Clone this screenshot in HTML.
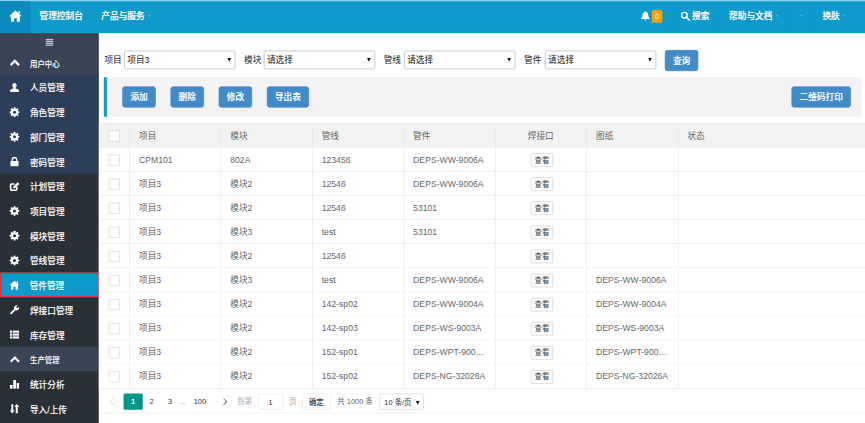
<!DOCTYPE html>
<html lang="zh-CN"><head><meta charset="utf-8"><title>管件管理</title>
<style>
html,body{margin:0;padding:0;width:865px;height:423px;overflow:hidden;background:#fff}
#w{position:absolute;left:0;top:0;width:1400px;height:686px;transform:scale(0.6179);transform-origin:0 0;font-family:"Liberation Sans","Noto Sans CJK SC",sans-serif;font-size:14px;color:#333;background:#fff;overflow:hidden}
#w *{box-sizing:border-box}
#strip{position:absolute;left:0;top:0;width:1400px;height:2px;background:#7fd1f0}
#top{position:absolute;left:0;top:2px;width:1400px;height:52px;background:#0e9acb;color:#fff;font-size:14px}
#homeb{position:absolute;left:0;top:0;width:49px;height:52px;background:#0b8bbd}
#homeb svg{position:absolute;left:14px;top:13px;width:22px;height:22px}
.tn{position:absolute;top:0;height:52px;line-height:47px;white-space:nowrap;font-weight:500;-webkit-text-stroke:.35px #fff}
.car{display:inline-block;width:0;height:0;border-left:3.500px solid transparent;border-right:3.500px solid transparent;border-top:4px solid rgba(255,255,255,.22);margin-left:5px;vertical-align:middle}
.dv{position:absolute;top:0;width:1px;height:52px;background:rgba(0,0,0,.03)}
#side{position:absolute;left:0;top:54px;width:160px;height:640px;background:#293038;color:#fff}
#fold{height:27px;position:relative}.bgl{position:absolute;left:0;width:160px}
#fold i{position:absolute;left:74px;width:11.500px;height:2px;background:#c5cbd2}
.st,.si{height:40px;position:relative;white-space:nowrap}
.st{font-size:12px}

.si.act{background:#0e9acb;border:2.500px solid #e0303c}
.ic{position:absolute;left:15px;top:12px;width:17px;height:17px}
.ic svg{width:100%;height:100%;display:block}
.st .ic{left:14.500px;top:12px;width:18px;height:18px}
.tx{position:absolute;left:48.500px;top:0;line-height:45px;font-weight:500;-webkit-text-stroke:.12px #fff}
.st .tx{left:48.500px;line-height:46px}
.si.act .ic{left:12.500px;top:9.500px;width:17px;height:17px}
.si.act .tx{left:46px;top:-2.500px}
#main{position:absolute;left:160px;top:54px;width:1240px;height:640px;background:#fff}
.lb{position:absolute;top:28px;height:30px;line-height:30px;font-size:14px;color:#222}
.sel{position:absolute;top:28px;width:180px;height:30px;border:1px solid #a9a9a9;border-radius:3px;background:#fff;line-height:28px;padding-left:4px;font-size:14px;color:#111}
.sel:after,.psel:after{content:"";position:absolute;right:6px;top:11px;border-left:3.500px solid transparent;border-right:3.500px solid transparent;border-top:6px solid #111}
.btn{position:absolute;height:34px;line-height:32px;border:1px solid #357ebd;background:#428bca;color:#fff;border-radius:4px;text-align:center;font-size:14px;font-weight:500;-webkit-text-stroke:.25px #fff}
#tb{position:absolute;left:8px;top:71px;width:1226px;height:64px;background:#f2f2f2;border-left:5px solid #0e9acb}
#tbl{position:absolute;left:0;top:145px;width:1240px;color:#666}
.tr{height:39px;display:flex;border-bottom:1px solid #e6e6e6;background:#fff}
.tr.th{height:40px;line-height:40px;background:#f2f2f2;border-top:1px solid #e6e6e6}
.c{width:148px;border-right:1px solid #e6e6e6;padding:0 15px 0 15px;line-height:39.500px;white-space:nowrap;overflow:hidden;flex:none}
.c0{width:50px;padding:0;position:relative}.c1{width:147.600px}.th .c{line-height:40px}
.c.last{flex:1;border-right:none}
.c.ctr{text-align:center}
.cb{position:absolute;left:16px;top:10.700px;width:18px;height:18px;border:1px solid #d2d2d2;border-radius:2px;background:#fff}
.th .cb{top:11px}
.vb{display:inline-block;height:22px;line-height:20px;padding:0 5px;border:1px solid #c9c9c9;border-radius:2px;font-size:12px;color:#444;background:#fff;vertical-align:middle;position:relative;top:0px;left:2px;font-weight:400}
#pg{position:absolute;left:0;top:575px;width:1240px;height:40px;border-bottom:1px solid #e6e6e6;font-size:12px;color:#333}
#pg span{position:absolute;top:8px;height:26px;line-height:26px;white-space:nowrap}
#pg .cur{background:#009688;color:#fff;border-radius:2px;text-align:center;font-weight:bold}
#pg .bx{border:1px solid #e2e2e2;border-radius:2px;text-align:center;background:#fff}
.arw{position:absolute;width:8px;height:8px;border-left:1.5px solid #333;border-bottom:1.5px solid #333}
</style></head><body>
<div id="w">
<div id="strip"></div>
<div id="top">
 <div id="homeb"><svg viewBox="0 0 16 16"><path fill="#fff" d="M8 1.200L15.400 8.300H13.300V14.800H9.700V10.600H6.300V14.800H2.700V8.300H.6z"/><path fill="#fff" d="M11.400 2.200h1.900v3.500l-1.900-1.800z"/></svg></div>
 <div class="tn" style="left:64px">管理控制台</div>
 <div class="tn" style="left:164px">产品与服务<i class="car"></i></div>
 <div class="dv" style="left:1087px"></div>
 <div class="tn" style="left:1036px;top:15px;width:17px;height:17px;line-height:0"><svg viewBox="0 0 16 16"><path fill="#fff" d="M8 1c.7 0 1.200.5 1.200 1.100 2 .6 3.200 2.300 3.200 4.600 0 3.300 1.200 4.300 2.400 5.300v1H1.200v-1c1.200-1 2.400-2 2.400-5.300 0-2.300 1.200-4 3.200-4.600C6.800 1.500 7.300 1 8 1zM6.300 13.800h3.400c0 1-.8 1.700-1.700 1.700s-1.700-.7-1.700-1.700z"/></svg></div>
 <div class="tn" style="left:1055px;top:14px;height:21px;line-height:21px;width:17px;background:#f9a00a;border-radius:3px;text-align:center;font-size:12px;font-weight:400;-webkit-text-stroke:0">0</div>
 <div class="tn" style="left:1101px;top:16px;width:16px;height:16px;line-height:0"><svg viewBox="0 0 16 16"><circle cx="6.600" cy="6.600" r="4.500" fill="none" stroke="#fff" stroke-width="2.200"/><path d="M10 10l4.600 4.600" stroke="#fff" stroke-width="2.600" stroke-linecap="round"/></svg></div>
 <div class="tn" style="left:1120px">搜索</div>
 <div class="dv" style="left:1163px"></div>
 <div class="tn" style="left:1180px">帮助与文档<i class="car"></i></div>
 <div class="dv" style="left:1273px"></div>
 <div class="tn" style="left:1289px"><i class="car"></i></div>
 <div class="dv" style="left:1314px"></div>
 <div class="tn" style="left:1331px">换肤<i class="car"></i></div>
</div>
<div id="side">
 <div class="bgl" style="top:0;height:67.500px;background:#394555"></div><div class="bgl" style="top:67px;height:160px;background:#2d3f58"></div><div class="bgl" style="top:507px;height:40px;background:#394555"></div>
 <div id="fold"><i style="top:8.600px"></i><i style="top:11.800px"></i><i style="top:15px"></i><i style="top:18.200px"></i></div>
<div class="st g1"><span class="ic"><svg viewBox="0 0 16 16"><path d="M2 11 L8 5 L14 11" fill="none" stroke="#fff" stroke-width="3.2" stroke-linecap="butt" stroke-linejoin="miter"/></svg></span><span class="tx">用户中心</span></div>
<div class="si g1"><span class="ic"><svg viewBox="0 0 16 16"><path fill="#fff" d="M8 1.2c2 0 3.3 1.5 3.3 3.6 0 1.500-.7 3-1.700 3.800v.9c1.600.5 5 1.500 5.200 3.100v2.200H1.200v-2.200c.2-1.600 3.600-2.600 5.200-3.100v-.9C5.400 7.800 4.700 6.300 4.700 4.800 4.700 2.700 6 1.200 8 1.200z"/></svg></span><span class="tx">人员管理</span></div>
<div class="si g1"><span class="ic"><svg viewBox="0 0 16 16"><g fill="#fff"><circle cx="8" cy="8" r="5.300"/><g id="t"><rect x="6.500" y=".6" width="3" height="14.800" rx=".6"/></g><rect x="6.500" y=".6" width="3" height="14.800" rx=".6" transform="rotate(45 8 8)"/><rect x="6.500" y=".6" width="3" height="14.800" rx=".6" transform="rotate(90 8 8)"/><rect x="6.500" y=".6" width="3" height="14.800" rx=".6" transform="rotate(135 8 8)"/></g><circle cx="8" cy="8" r="2.300" fill="#2d3f58"/></svg></span><span class="tx">角色管理</span></div>
<div class="si g1"><span class="ic"><svg viewBox="0 0 16 16"><g fill="#fff"><circle cx="8" cy="8" r="5.300"/><g id="t"><rect x="6.500" y=".6" width="3" height="14.800" rx=".6"/></g><rect x="6.500" y=".6" width="3" height="14.800" rx=".6" transform="rotate(45 8 8)"/><rect x="6.500" y=".6" width="3" height="14.800" rx=".6" transform="rotate(90 8 8)"/><rect x="6.500" y=".6" width="3" height="14.800" rx=".6" transform="rotate(135 8 8)"/></g><circle cx="8" cy="8" r="2.300" fill="#2d3f58"/></svg></span><span class="tx">部门管理</span></div>
<div class="si g1"><span class="ic"><svg viewBox="0 0 16 16"><path d="M4.600 7.500V5.200a3.400 3.400 0 0 1 6.800 0v2.300" fill="none" stroke="#fff" stroke-width="2"/><rect x="1.800" y="7" width="12.400" height="8" rx="1" fill="#fff"/></svg></span><span class="tx">密码管理</span></div>
<div class="si "><span class="ic"><svg viewBox="0 0 16 16"><path d="M11.500 9v3.300a1.700 1.700 0 0 1-1.700 1.700H3.700A1.700 1.700 0 0 1 2 12.300V6.200a1.700 1.700 0 0 1 1.700-1.700H8" fill="none" stroke="#fff" stroke-width="2.600"/><path fill="#fff" d="M6 11.200l.6-3.200 6.200-6.200 2.600 2.600-6.200 6.200z"/></svg></span><span class="tx">计划管理</span></div>
<div class="si "><span class="ic"><svg viewBox="0 0 16 16"><g fill="#fff"><circle cx="8" cy="8" r="5.300"/><g id="t"><rect x="6.500" y=".6" width="3" height="14.800" rx=".6"/></g><rect x="6.500" y=".6" width="3" height="14.800" rx=".6" transform="rotate(45 8 8)"/><rect x="6.500" y=".6" width="3" height="14.800" rx=".6" transform="rotate(90 8 8)"/><rect x="6.500" y=".6" width="3" height="14.800" rx=".6" transform="rotate(135 8 8)"/></g><circle cx="8" cy="8" r="2.300" fill="#293038"/></svg></span><span class="tx">项目管理</span></div>
<div class="si "><span class="ic"><svg viewBox="0 0 16 16"><g fill="#fff"><circle cx="8" cy="8" r="5.300"/><g id="t"><rect x="6.500" y=".6" width="3" height="14.800" rx=".6"/></g><rect x="6.500" y=".6" width="3" height="14.800" rx=".6" transform="rotate(45 8 8)"/><rect x="6.500" y=".6" width="3" height="14.800" rx=".6" transform="rotate(90 8 8)"/><rect x="6.500" y=".6" width="3" height="14.800" rx=".6" transform="rotate(135 8 8)"/></g><circle cx="8" cy="8" r="2.300" fill="#293038"/></svg></span><span class="tx">模块管理</span></div>
<div class="si "><span class="ic"><svg viewBox="0 0 16 16"><g fill="#fff"><circle cx="8" cy="8" r="5.300"/><g id="t"><rect x="6.500" y=".6" width="3" height="14.800" rx=".6"/></g><rect x="6.500" y=".6" width="3" height="14.800" rx=".6" transform="rotate(45 8 8)"/><rect x="6.500" y=".6" width="3" height="14.800" rx=".6" transform="rotate(90 8 8)"/><rect x="6.500" y=".6" width="3" height="14.800" rx=".6" transform="rotate(135 8 8)"/></g><circle cx="8" cy="8" r="2.300" fill="#293038"/></svg></span><span class="tx">管线管理</span></div>
<div class="si act"><span class="ic"><svg viewBox="0 0 16 16"><path fill="#fff" d="M8 1.200L15.400 8.300H13.300V14.800H9.700V10.600H6.300V14.800H2.700V8.300H.6z"/><path fill="#fff" d="M11.400 2.200h1.900v3.500l-1.900-1.800z"/></svg></span><span class="tx">管件管理</span></div>
<div class="si "><span class="ic"><svg viewBox="0 0 16 16"><path fill="#fff" d="M14.700 3.200l-2.500 2.500-1.900-1.900 2.500-2.500c-1.600-.6-3.400-.2-4.500 1-1.100 1.200-1.400 2.800-.9 4.200L1.600 12.300c-.6.600-.6 1.600 0 2.100.6.600 1.500.6 2.100 0l5.800-5.800c1.400.5 3.100.2 4.200-.9 1.200-1.200 1.600-3 1-4.500z"/></svg></span><span class="tx">焊接口管理</span></div>
<div class="si "><span class="ic"><svg viewBox="0 0 16 16"><g fill="#fff"><rect x="1" y="2" width="3.600" height="3.200"/><rect x="5.600" y="2" width="9.400" height="3.200"/><rect x="1" y="6.400" width="3.600" height="3.200"/><rect x="5.600" y="6.400" width="9.400" height="3.200"/><rect x="1" y="10.800" width="3.600" height="3.200"/><rect x="5.600" y="10.800" width="9.400" height="3.200"/></g></svg></span><span class="tx">库存管理</span></div>
<div class="st "><span class="ic"><svg viewBox="0 0 16 16"><path d="M2 11 L8 5 L14 11" fill="none" stroke="#fff" stroke-width="3.2" stroke-linecap="butt" stroke-linejoin="miter"/></svg></span><span class="tx">生产管理</span></div>
<div class="si "><span class="ic"><svg viewBox="0 0 16 16"><g fill="#fff"><rect x="1" y="9.500" width="4" height="5.500"/><rect x="6" y="2" width="4.300" height="13"/><rect x="11.300" y="6.500" width="3.700" height="8.500"/></g></svg></span><span class="tx">统计分析</span></div>
<div class="si "><span class="ic"><svg viewBox="0 0 16 16"><g fill="#fff"><path d="M4.600 15.400L.8 10.600h2.300V1.200h3v9.400h2.300z"/><path d="M11.400.6L15.200 5.400h-2.300v9.400h-3V5.400H7.600z"/></g></svg></span><span class="tx">导入/上传</span></div>
</div>
<div id="main">
 <div class="lb" style="left:9px">项目</div><div class="sel" style="left:41px">项目3</div>
 <div class="lb" style="left:235px">模块</div><div class="sel" style="left:267px">请选择</div>
 <div class="lb" style="left:461px">管线</div><div class="sel" style="left:494px">请选择</div>
 <div class="lb" style="left:688px">管件</div><div class="sel" style="left:722px">请选择</div>
 <div class="btn" style="left:916px;top:27px;width:54px">查询</div>
 <div id="tb">
  <div class="btn" style="left:25px;top:15px;width:54px">添加</div>
  <div class="btn" style="left:103px;top:15px;width:54px">删除</div>
  <div class="btn" style="left:181px;top:15px;width:54px">修改</div>
  <div class="btn" style="left:259px;top:15px;width:68px">导出表</div>
  <div class="btn" style="left:1108px;top:15px;width:96px">二维码打印</div>
 </div>
 <div id="tbl">
<div class="tr th"><div class="c c0"><i class="cb"></i></div><div class="c c1">项目</div><div class="c">模块</div><div class="c">管线</div><div class="c">管件</div><div class="c ctr">焊接口</div><div class="c">图纸</div><div class="c last">状态</div></div>
<div class="tr"><div class="c c0"><i class="cb"></i></div><div class="c c1">CPM101</div><div class="c">802A</div><div class="c">123456</div><div class="c">DEPS-WW-9006A</div><div class="c ctr"><span class="vb">查看</span></div><div class="c"></div><div class="c last"></div></div>
<div class="tr"><div class="c c0"><i class="cb"></i></div><div class="c c1">项目3</div><div class="c">模块2</div><div class="c">12546</div><div class="c">DEPS-WW-9006A</div><div class="c ctr"><span class="vb">查看</span></div><div class="c"></div><div class="c last"></div></div>
<div class="tr"><div class="c c0"><i class="cb"></i></div><div class="c c1">项目3</div><div class="c">模块2</div><div class="c">12546</div><div class="c">53101</div><div class="c ctr"><span class="vb">查看</span></div><div class="c"></div><div class="c last"></div></div>
<div class="tr"><div class="c c0"><i class="cb"></i></div><div class="c c1">项目3</div><div class="c">模块3</div><div class="c">test</div><div class="c">53101</div><div class="c ctr"><span class="vb">查看</span></div><div class="c"></div><div class="c last"></div></div>
<div class="tr"><div class="c c0"><i class="cb"></i></div><div class="c c1">项目3</div><div class="c">模块2</div><div class="c">12546</div><div class="c"></div><div class="c ctr"><span class="vb">查看</span></div><div class="c"></div><div class="c last"></div></div>
<div class="tr"><div class="c c0"><i class="cb"></i></div><div class="c c1">项目3</div><div class="c">模块3</div><div class="c">test</div><div class="c">DEPS-WW-9006A</div><div class="c ctr"><span class="vb">查看</span></div><div class="c">DEPS-WW-9006A</div><div class="c last"></div></div>
<div class="tr"><div class="c c0"><i class="cb"></i></div><div class="c c1">项目3</div><div class="c">模块2</div><div class="c">142-sp02</div><div class="c">DEPS-WW-9004A</div><div class="c ctr"><span class="vb">查看</span></div><div class="c">DEPS-WW-9004A</div><div class="c last"></div></div>
<div class="tr"><div class="c c0"><i class="cb"></i></div><div class="c c1">项目3</div><div class="c">模块2</div><div class="c">142-sp03</div><div class="c">DEPS-WS-9003A</div><div class="c ctr"><span class="vb">查看</span></div><div class="c">DEPS-WS-9003A</div><div class="c last"></div></div>
<div class="tr"><div class="c c0"><i class="cb"></i></div><div class="c c1">项目3</div><div class="c">模块2</div><div class="c">152-sp01</div><div class="c">DEPS-WPT-900…</div><div class="c ctr"><span class="vb">查看</span></div><div class="c">DEPS-WPT-900…</div><div class="c last"></div></div>
<div class="tr"><div class="c c0"><i class="cb"></i></div><div class="c c1">项目3</div><div class="c">模块2</div><div class="c">152-sp02</div><div class="c">DEPS-NG-32026A</div><div class="c ctr"><span class="vb">查看</span></div><div class="c">DEPS-NG-32026A</div><div class="c last"></div></div>
 </div>
 <div id="pg">
  <i class="arw" style="left:20px;top:17px;transform:rotate(45deg);border-color:#d2d2d2"></i>
  <span class="cur" style="left:40px;width:31px">1</span>
  <span style="left:82px">2</span>
  <span style="left:112px">3</span>
  <span style="left:130px;color:#777">…</span>
  <span style="left:153.500px">100</span>
  <i class="arw" style="left:198px;top:17px;transform:rotate(-135deg)"></i>
  <span style="left:224px;color:#aaa">到第</span>
  <span class="bx" style="left:258px;width:40px">1</span>
  <span style="left:308px;color:#aaa">页</span>
  <span class="bx" style="left:329px;width:46px;font-weight:500">确定</span>
  <span style="left:386px;color:#666">共 1000 条</span>
  <span class="bx psel" style="left:454px;width:72px;text-align:left;padding-left:7px;border-color:#d0d0d0">10 条/页</span>
 </div>
</div>
</div>
</body></html>
